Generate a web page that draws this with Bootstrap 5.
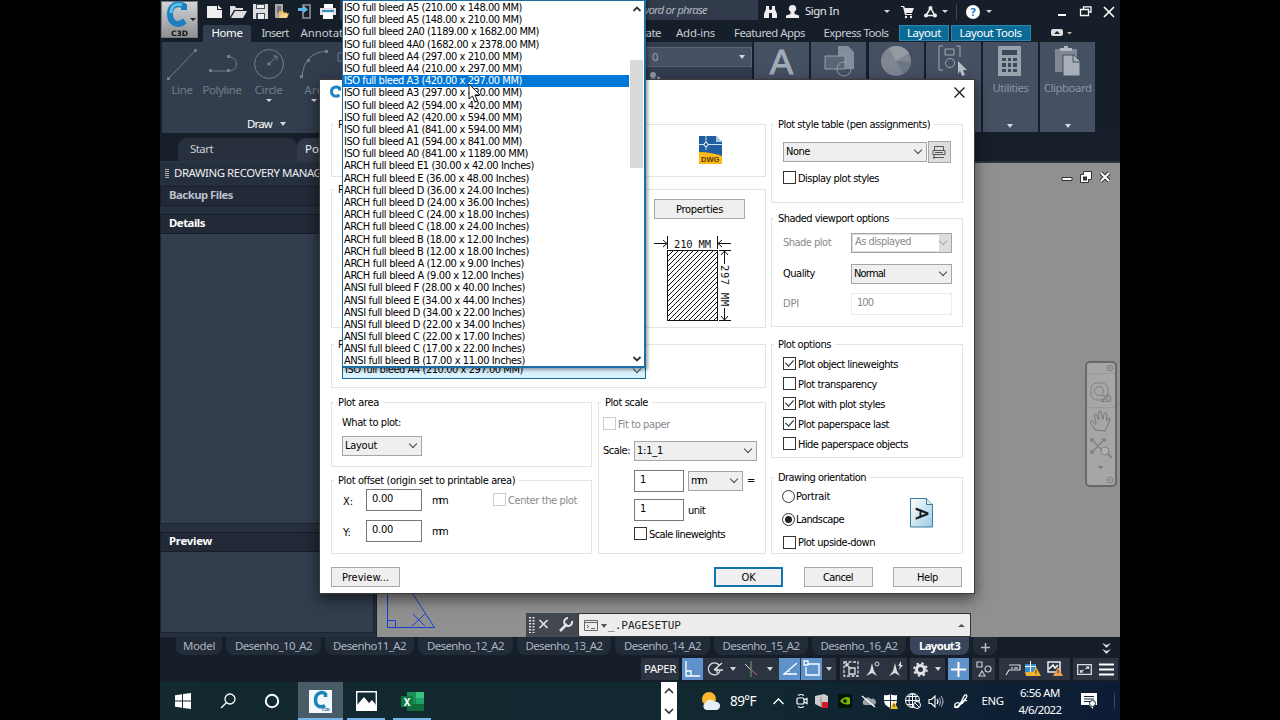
<!DOCTYPE html>
<html lang="en">
<head>
  <meta charset="UTF-8">
  <title>Page Setup</title>
  <meta name="viewport" content="width=device-width, initial-scale=1">
  <link href="https://cdn.jsdelivr.net/npm/bootstrap@5.3.2/dist/css/bootstrap.min.css" rel="stylesheet">
  <style>
    body { background: #000; width: 1280px; height: 720px; overflow: hidden; font: 11.4px/1.25 "Noto Sans", "Open Sans", sans-serif; color: #c9ced6; }
    svg { display: block; overflow: visible; }
    [data-w] { white-space: nowrap; }
    .app { width: 960px; height: 720px; background: #161e29; }
    .strip { display: grid; align-items: center; justify-items: center; white-space: nowrap; }
    .caret { width: 0; height: 0; border: 3.5px solid transparent; border-top: 4px solid #d5d8dc; border-bottom: 0; }
    .caret-sm { border-width: 3px; border-top-width: 3px; border-bottom: 0; }

    /* title bar */
    .titlebar { height: 23px; padding-left: 43px; grid-template-columns: 24px 23px 20px 23px 23px 24px 418px 24px 20px 78px 14px 26px 20px 9px 14px 20px 12px 55px 24px 23px 23px; color: #e6e9ec; }
    .searchbox { width: 100%; height: 20px; align-self: start; background: #323b4b; color: #b0b6c0; font-style: italic; padding: 3px 51px 0 0; text-align: right; }
    .sign { justify-self: start; padding-left: 3px; }
    .vline { width: 1px; height: 16px; background: #3d4653; }
    .appbtn { left: 161px; top: 1px; width: 37px; height: 37px; background: linear-gradient(#d3d4d6, #8f9093); border: 1px solid #77797d; z-index: 2; }

    /* ribbon */
    .menutabs { height: 19px; padding: 1px 0 0 43px; grid-template-columns: 48px 48px 52px 249px 66px 59px 89px 84px 52px 81px 89px; }
    .menutabs > .on { background: #323d4e; color: #fff; width: 48px; height: 17px; padding-top: 1px; text-align: center; align-self: end; border-radius: 2px 2px 0 0; }
    .ctx { background: #0b6b97; border: 1px solid #2a86b0; color: #fff; height: 16px; line-height: 14px; text-align: center; }
    .ribbon { height: 91px; padding-left: 2px; display: grid; grid-template-columns: 590px repeat(6, 55px); column-gap: 2.2px; }
    .panel-wide { background: #323d4e; color: #727d8c; }
    .tools { display: grid; grid-template-columns: 40px 40px 53px 37px; justify-items: center; padding-top: 5px; height: 75px; align-content: start; row-gap: 2px; }
    .tools svg { height: 34px; }
    .draw-t { padding-left: 85px; color: #fff; }
    .layers { width: 110px; padding-top: 5px; }
    .layerbox { height: 20px; background: #465163; border: 1px solid #596477; padding: 0 6px 0 9px; color: #99a1ad; }
    .pane { background: #455063; color: #8b94a1; padding-top: 4px; height: 90px; }
    .pane > span { margin-top: 5px; }
    .doctabs { height: 30px; padding: 5px 0 0 18px; display: flex; background: #161f2a; border-bottom: 2px solid #2b3442; }
    .doctab { width: 119px; height: 23px; background: #28303e; border-radius: 9px 9px 0 0; padding: 4px 0 0 12px; }
    .doctab + .doctab { background: #323b4b; color: #fff; padding-left: 8px; }

    /* drawing recovery palette */
    .palette { width: 217px; background: #262f3d; border-right: 1px solid #1b2330; }
    .pal-title { height: 23px; color: #eef0f2; padding: 3px 0 0 14px; position: relative; }
    .grip { width: 4px; height: 9px; background: repeating-linear-gradient(#a7adb5 0 1px, transparent 1px 2px); position: absolute; left: 5px; top: 6px; }
    .pal-head { background: #222a37; border: 1px solid #171e29; height: 20px; padding: 1px 0 0 8px; font-weight: 700; color: #fff; margin-right: 2px; }
    .pal-head.soft { color: #b9bfc8; }
    .pal-body { background: #323d4e; border: 1px solid #1b2330; border-top: 0; margin-right: 2px; }
    #thumb { height: 81px; }

    /* canvas */
    .canvas { background: #909090; position: relative; }
    .wbtns { right: 9px; top: 8px; width: 50px; }
    .tri { left: 9px; top: 425px; }
    .navbar-tool { right: 3px; top: 198px; width: 32px; height: 126px; background: #a6a6a6; border: 2px solid #686868; border-radius: 5px; }
    .cmdline { left: 149px; bottom: 0; width: 445px; height: 24px; background: #434750; z-index: 1; }
    .cmdbox { width: 393px; background: #ededed; border: 1px solid #333; border-radius: 2px; color: #222; font: 11px "DejaVu Sans Mono", monospace; padding: 1px 5px 0; }
    .modeltabs { height: 19px; padding-left: 14px; grid-template-columns: 50px 99px 93px 99px 98px 99px 98px 98px 63px 28px 94px 27px; color: #adb5c0; }
    .modeltabs > div { align-self: stretch; justify-self: stretch; text-align: center; padding-top: 2px; }
    .mtab { background: #222b38; border-radius: 0 0 8px 8px; margin: 0 2px 1px; }
    .mtab.on { background: #38455a; color: #fff; font-weight: 700; }

    /* status bar */
    .statusbar { height: 26px; padding: 2px 2px 2px 481px; display: grid; grid-template-columns: 38px 154px 67px 35px 21px 23px 71px 45px; column-gap: 3.3px; }
    .statusbar > div { background: #2c3441; height: 22px; color: #fff; }
    .g-snap { grid-template-columns: 21px 24px 12px 24px 14px 2px 21px 1px 21px 14px; }
    .g-anno { grid-template-columns: 22px 23px 22px; }
    .g-gear { grid-template-columns: 22px 13px; }
    .g-iso { grid-template-columns: 28px 13px 30px; }
    .g-end { grid-template-columns: 22px 23px; }
    .lit { background: #5f92ca !important; width: 21px; height: 22px; padding: 2px; }

    /* taskbar */
    .taskbar { height: 38px; grid-template-columns: 45px 46px 42px 5px 45px 46px 46px 1fr 16px 22px 24px 40px 30px 18px 22px 24px 22px 23px 22px 23px 28px 35px 60px 38px 12px; background: linear-gradient(90deg, #12292f, #112831 60%, #0d1c35); color: #fff; }
    .task { height: 38px; width: 45px; display: flex; align-items: center; justify-content: center; position: relative; }
    .task::after { content: ""; position: absolute; bottom: 0; height: 2px; width: 38px; background: #76b5ec; }
    .task.cur { background: #475c66; }
    .task.cur::after { width: 45px; }
    .scrollbit { background: #fff; width: 16px; height: 38px; padding: 6px 0; }
    .temp { font-size: 13.5px; }
    .clock { line-height: 17px; text-align: center; padding-bottom: 1px; }

    /* page setup dialog */
    .dlg { left: 319px; top: 79px; width: 656px; height: 515px; background: #fff; border: 1px solid #3c3c3c; box-shadow: 0 5px 14px rgba(0,0,0,.55); color: #000; font: 11px/14px "DejaVu Sans Condensed", Tahoma, sans-serif; z-index: 5; }
    .dlg-head { height: 44px; padding: 6px 9px 0 9px; }
    .dlg-x { margin-top: 1px; }
    .dlg-body { padding-left: 11px; display: grid; grid-template-columns: 435px 192px; column-gap: 5px; }
    .grp { border: 1px solid #e3e3e3; position: relative; }
    .grp-t { position: absolute; top: -8px; left: 2px; padding: 0 4px; background: #fff; line-height: 15px; }
    .h-page { height: 53px; margin-bottom: 12px; padding: 11px 0 0 367px; }
    .h-printer { height: 139px; margin-bottom: 16px; padding: 9px 0 0 322px; }
    .h-paper { height: 44px; margin-bottom: 14px; padding: 12px 0 0 10px; }
    .h-area { height: 65px; margin-bottom: 13px; padding: 9px 0 0 10px; }
    .h-offset { height: 74px; padding: 8px 0 0 11px; }
    .h-scale { height: 152px; width: 168px; padding: 11px 0 0 4px; }
    .h-style { height: 79px; margin-bottom: 15px; padding: 17px 0 0 11px; }
    .h-shade { height: 109px; margin-bottom: 17px; padding: 9px 0 0 11px; }
    .h-opts { height: 114px; margin-bottom: 19px; padding: 9px 0 0 11px; }
    .h-orient { height: 77px; padding: 7px 28px 0 11px; }
    .w-left { width: 261px; }
    .w-lab { width: 23px; padding-top: 3px; }
    .w-mm { width: 71px; padding: 1px 0 0 10px; }
    .w-sc { width: 31px; }
    .frow { display: flex; align-items: center; height: 20px; }
    .frow > [data-w] { padding-top: 1px; }
    .shade-row { height: 30.5px; }
    .shade-row > :first-child { width: 68px; }
    .orient-row { height: 23px; }
    .h-offset .frow { height: 22px; }
    .h-offset .mt-y { margin-top: 9px; }
    .h-scale .s1 { margin-top: 7px; }
    .h-scale .s2, .h-scale .s3, .h-scale .s4 { margin-left: 31px; }
    .h-scale .s2 { margin-top: 10px; }
    .h-scale .s3 { margin-top: 9px; }
    .h-scale .s4 { margin-top: 4px; }
    .h-style .st { margin-top: 6px; }

    /* controls */
    .sel { background: #efefef; border: 1px solid #a5a5a5; height: 20px; display: flex; align-items: center; justify-content: space-between; padding: 0 5px 0 2px; }
    .sel::after { content: ""; width: 6px; height: 6px; border: solid #444; border-width: 0 1.2px 1.2px 0; transform: translateY(-2px) rotate(45deg); }
    .sel.gray { background: #ddd; padding-left: 1px; }
    .sel.gray > span { background: #fff; width: 86px; height: 16px; padding-left: 2px; }
    .sel.gray::after { border-color: #aaa; }
    .inp { border: 1px solid #777; height: 22px; padding: 2px 0 0 5px; background: #fff; }
    .cb { width: 13px; height: 13px; border: 1px solid #333; margin-right: 2px; flex: none; background: #fff; position: relative; top: -.5px; }
    .cb.off { border-color: #ccc; }
    .chk::after { content: ""; position: absolute; left: 3px; top: 0; width: 5px; height: 8px; border: solid #222; border-width: 0 1.3px 1.3px 0; transform: rotate(42deg); }
    .rd { border-radius: 50%; margin-right: 1px; margin-left: -1px; padding: 2px; }
    .rd i { display: block; width: 7px; height: 7px; border-radius: 50%; background: #222; }
    .dim { color: #8a8a8a; }
    .w-50 { width: 50px !important; }
    .w-55 { width: 55px; } .w-56 { width: 56px; } .w-80 { width: 80px; } .w-101 { width: 101px; } .w-123 { width: 123px; } .w-144 { width: 144px; }
    .w-combo { width: 304px; height: 22px; background: #d9f1fd; border-color: #1a6a9c; align-items: flex-start; padding-top: 5px; }
    .w-combo::after { margin-top: 5px; }
    .wbtn { background: #efefef; border: 1px solid #a8a8a8; height: 20px; width: 69px; padding: 0; line-height: 19px; color: #000; text-align: center; }
    .wbtn.def { border: 2px solid #1373ac; line-height: 17px; }
    .wbtn.prop { width: 91px; }
    .wbtn.editor { width: 23px; height: 22px; margin-left: 1px; background: #ddd; }
    .dlg-foot { padding: 13px 12px 0 11px; }
    .foot-r { gap: 20.5px; }
    .sheet { margin-top: 13px; }

    /* opened paper size list */
    .drop { left: 342px; top: 0; width: 304px; height: 368px; background: #fff; border: 1px solid #1c6fa5; border-width: 1px 2px 2px 1px; z-index: 8; box-shadow: 2px 2px 3px rgba(0,0,0,.35); color: #000; font: 11px/12.19px "DejaVu Sans Condensed", Tahoma, sans-serif; overflow: hidden; }
    .drop-items { width: 286px; padding-top: 1px; }
    .drop-items > div { height: 12.19px; padding-left: 1px; }
    .drop-items > .hit { background: #0078d7; color: #fff; }
    .drop-scroll { width: 15px; padding: 5px 0 4px; }
    .thumb { width: 13px; height: 108px; margin-top: 48px; background: #dadada; }
    .cursor { left: 468px; top: 83px; z-index: 9; }
  </style>
</head>
<body>

  <div class="app mx-auto d-flex flex-column">

    <!-- Quick access bar -->
    <div class="strip titlebar">
      <svg width="16" height="13" fill="#eee"><path d="M0 1h10v4h5v8H0z"/><path d="M11 0l4 4h-4z"/></svg>
      <svg width="17" height="13" fill="#ddd"><path d="M0 12V1h5l1 2h7v2H4z"/><path d="M1 13l4-7h12l-4 7z"/></svg>
      <svg width="15" height="15"><path d="M0 0h15v15H0z" fill="#ddd"/><path d="M3 0h9v5H3zM3 9h9v6H3z" fill="#46505f"/><path d="M4 1h7v3H4zM5 10h6v5H5z" fill="#eee"/></svg>
      <svg width="15" height="15"><path d="M1 0h8v14H1z" fill="#aaa"/><path d="M3 2h4v7H3z" fill="#777"/><path d="M5 14V7h4l1 1.500h3V10H7z" fill="#e9b95c"/><path d="M5 14l2.500-4.500H15L13 14z" fill="#f7d48a"/></svg>
      <svg width="14" height="15"><path d="M5 1h7v13H5z" fill="none" stroke="#999" stroke-width="1.500"/><path d="M0 4h5V1l5 4.500-5 4V7H0z" fill="#5db4e8"/></svg>
      <svg width="16" height="15"><path d="M4 0h9v4H4z" fill="#fff"/><path d="M0 4h16v7H0z" fill="#ddd"/><path d="M2 6h12v2H2z" fill="#3b93cc"/><path d="M3 9h10v6H3z" fill="#fff"/></svg>
      <div class="searchbox">Type a key<span data-w="66">word or phrase</span></div>
      <svg width="13" height="12" fill="#eee"><path d="M2 0h3v3l1 1h1l1-1V0h3v3l2 5v4H8V7H5v5H0V8l2-5z"/></svg>
      <svg width="13" height="13" fill="#eee"><path d="M6.500 0a3.500 3.500 0 0 1 2 6.500V9l4.500 1.500V13H0v-2.500L4.500 9V6.500a3.500 3.500 0 0 1 2-6.500z"/></svg>
      <span class="sign"><span data-w="34">Sign In</span></span>
      <i class="caret caret-sm"></i>
      <svg width="13" height="12" fill="#eee"><path d="M0 0h3l1 2h9l-2 5H5l.5 1H11v1H4L2 1H0z"/><circle cx="5" cy="11" r="1.200"/><circle cx="10" cy="11" r="1.200"/></svg>
      <svg width="13" height="12" fill="none" stroke="#eee" stroke-width="1.500"><path d="M6.500 2L2 9.500h9z"/><g fill="#eee" stroke="none"><circle cx="6.500" cy="2" r="2"/><circle cx="2" cy="9.500" r="2"/><circle cx="11" cy="9.500" r="2"/></g></svg>
      <i class="caret caret-sm"></i>
      <i class="vline"></i>
      <svg width="14" height="14"><circle cx="7" cy="7" r="7" fill="#fff"/><text x="7" y="11" font-size="11" font-weight="700" text-anchor="middle" fill="#1a6fae">?</text></svg>
      <i class="caret caret-sm"></i>
      <span></span>
      <svg width="8" height="9"><path d="M0 8h8" stroke="#fff" stroke-width="2"/></svg>
      <svg width="12" height="11" fill="none" stroke="#fff"><path d="M3.500 3V.8h7.500V6H9M.5 3.500h8v6h-8z" stroke-width="1.300"/></svg>
      <svg width="10" height="10"><path d="M0 0l10 10M10 0L0 10" stroke="#fff" stroke-width="1.600"/></svg>
    </div>

    <!-- Ribbon tabs -->
    <div class="strip menutabs">
      <div class="on"><span data-w="31">Home</span></div>
      <span data-w="27">Insert</span>
      <span data-w="49">Annotate</span>
      <span></span>
      <span data-w="56">Collaborate</span>
      <span data-w="39">Add-ins</span>
      <span data-w="71">Featured Apps</span>
      <span data-w="65">Express Tools</span>
      <div class="ctx w-50"><span data-w="34">Layout</span></div>
      <div class="ctx w-80"><span data-w="62">Layout Tools</span></div>
      <svg width="89" height="8"><rect x="20" y="0" width="12" height="7" rx="2" fill="#ddd"/><path d="M23 5l3-3 3 3z" fill="#222"/><path d="M36 3h5l-2.500 2.500z" fill="#bbb"/></svg>
    </div>

    <!-- Ribbon -->
    <div class="ribbon">
      <div class="panel-wide d-flex justify-content-between">
        <div>
          <div class="tools">
            <svg width="32" stroke="#727d8c" fill="none"><path d="M3 31L29 4"/><path d="M1 30h3v3H1zM28 2h3v3h-3z" fill="#727d8c" stroke="none"/></svg>
            <svg width="32" stroke="#727d8c" fill="none"><path d="M4 24h19c10 0 10-14 0-14"/><path d="M3 22h3v3H3zM21 22h3v3h-3zM21 8h3v3h-3z" fill="#727d8c" stroke="none"/></svg>
            <svg width="32" stroke="#727d8c" fill="none"><circle cx="16" cy="17" r="14.500"/><path d="M16 17l8-8M20 9h4v4"/><path d="M14.500 15.500h3v3h-3z" fill="#727d8c" stroke="none"/></svg>
            <svg width="32" stroke="#727d8c" fill="none"><path d="M4 30Q6 5 30 4M40 6h8v8h-8z"/><path d="M2 28h3v3H2zM9 12h3v3H9zM27 3h3v3h-3z" fill="#727d8c" stroke="none"/></svg>
            <span data-w="21">Line</span><span data-w="39">Polyline</span><span data-w="28">Circle</span><span data-w="18">Arc</span>
            <span></span><span></span><i class="caret caret-sm"></i><i class="caret caret-sm"></i>
          </div>
          <div class="draw-t d-flex align-items-center gap-2"><span data-w="25">Draw</span><i class="caret"></i></div>
        </div>
        <div class="layers">
          <div class="layerbox d-flex justify-content-between align-items-center">0<i class="caret"></i></div>
          <svg width="60" height="14" class="mt-1" fill="#8d96a3"><circle cx="11" cy="4" r="3"/><path d="M5 11c1-5 11-5 12 0M15 5l4 2-4 2z"/></svg>
        </div>
      </div>
      <div class="pane"><svg width="55" height="28"><text x="27.500" y="28" font-family="Liberation Sans" font-size="35" text-anchor="middle" fill="#a3abb6" stroke="#a3abb6">A</text></svg></div>
      <div class="pane"><svg width="55" height="30" fill="none" stroke="#97a0ac"><path d="M27 0h10l6 6v17H27z" fill="#848d9b" stroke="none"/><path d="M14 10h20v13H14z" fill="#5c6676"/><circle cx="33" cy="23" r="7"/></svg></div>
      <div class="pane"><svg width="55" height="30"><circle cx="27" cy="15" r="15" fill="#7f8792"/><path d="M27 15L20 2a15 15 0 0 1 20 5z" fill="#959ba4"/><path d="M27 15l7 13a15 15 0 0 0 8-12z" fill="#6d7683"/></svg></div>
      <div class="pane"><svg width="55" height="30" fill="none" stroke="#a0a8b3"><path d="M17 0h-4v24h4M30 0h4v11"/><path d="M19 3h9v6h-9z"/><circle cx="24" cy="17" r="4.500"/><path d="M32 15l9 9-4 0 2 5-3 1-2-5-2 3z" fill="#bcc1c8" stroke="none"/></svg></div>
      <div class="pane d-flex flex-column align-items-center">
        <svg width="24" height="30"><path d="M0 0h23v30H0z" fill="#99a1ac"/><path d="M4 4h15v5H4zM4 12h4v3H4zm6 0h3v3h-3zm5 0h4v3h-4zM4 17h4v4H4zm6 0h3v4h-3zm5 0h4v4h-4zM4 23h4v3H4zm6 0h3v3h-3zm5 0h4v3h-4z" fill="#3d4859"/></svg>
        <span data-w="36">Utilities</span><i class="caret mt-auto mb-1"></i>
      </div>
      <div class="pane d-flex flex-column align-items-center">
        <svg width="26" height="30"><path d="M0 3h22v23H0z" fill="#7f8895"/><path d="M5 5V2h4V0h4v2h4v3z" fill="#b4bac3"/><path d="M8 9h11l6 6v15H8z" fill="#a8afb9" stroke="#455063"/><path d="M18 9v7h7" fill="none" stroke="#455063"/></svg>
        <span data-w="48">Clipboard</span><i class="caret mt-auto mb-1"></i>
      </div>
    </div>

    <!-- File tabs -->
    <div class="doctabs">
      <div class="doctab"><span data-w="23">Start</span></div>
      <div class="doctab">Portuguese</div>
    </div>

    <div class="d-flex flex-grow-1">
      <div class="palette d-flex flex-column">
        <div class="pal-title"><i class="grip"></i><span data-w="160">DRAWING RECOVERY MANAGER</span></div>
        <div class="pal-head soft"><span data-w="64">Backup Files</span></div>
        <div class="pal-head mt-2"><span data-w="36">Details</span></div>
        <div class="pal-body flex-grow-1"></div>
        <div class="pal-head mt-2"><span data-w="43">Preview</span></div>
        <div class="pal-body mb-1" id="thumb"></div>
      </div>
      <div class="canvas flex-grow-1">
        <div class="wbtns position-absolute d-flex justify-content-between align-items-center">
          <svg width="12" height="12"><path d="M1 6.500h10v3H1z" fill="#fff" stroke="#333"/></svg>
          <svg width="12" height="12"><path d="M3.500.5h8v8h-3v3h-8v-8h3z" fill="#fff" stroke="#333"/><path d="M3 5.500h4v4H3z" fill="#333"/></svg>
          <svg width="12" height="12"><path d="M2 2l8 8M10 2l-8 8" stroke="#333" stroke-width="4"/><path d="M2 2l8 8M10 2l-8 8" stroke="#fff" stroke-width="2"/></svg>
        </div>
        <svg class="tri position-absolute" width="50" height="42" fill="none" stroke="#1440d8"><path d="M1.500 0v39.500h47L23 0M1.500 32.500h8v7M27 26l12 12M26 38l13-12"/></svg>
        <div class="navbar-tool position-absolute">
          <svg width="28" height="122" fill="none" stroke="#818181"><path d="M0 10.500h28M0 44.500h28" stroke="#999"/><circle cx="23" cy="5" r="3"/><path d="M21.500 3.500l3 3m0-3l-3 3"/><rect x="4" y="20" width="17" height="17" rx="6"/><circle cx="12" cy="28" r="4.500"/><path d="M8 67c-2-5-6-7-4-9 2-1 4 4 5 3 0-4-3-9-1-10s3 6 4 6c0-4-1-9 1-9s2 6 3 8c1-4 1-7 3-6s0 6 1 8c1-3 3-4 3-2-1 4-3 8-5 12z" stroke="#777"/><path d="M4 76l14 14M18 76L4 90M4 79v-3h3M15 76h3v3M4 87v3h3" stroke-width="1.500"/><circle cx="18" cy="88" r="4" fill="#b0b0b0"/><path d="M21 91l4 4" stroke-width="2"/><circle cx="23" cy="117" r="3"/><path d="M21 117h4"/><path d="M11 103h5l-2.500 3z" fill="#777" stroke="none"/><text x="14" y="39" font-size="8" fill="#66717e" stroke="none">2D</text></svg>
        </div>
        <div class="cmdline position-absolute d-flex justify-content-between">
          <svg width="50" height="24" fill="none" stroke="#e5e5e5"><path d="M4 4v16M7.500 4v16" stroke-width="2" stroke-dasharray="1.500 1.500"/><path d="M13.500 7l8 8m0-8l-8 8" stroke-width="1.700"/><path d="M34 18l7-7" stroke-width="2.500"/><path d="M46 8a4 4 0 1 1-4-3" stroke-width="2"/></svg>
          <div class="cmdbox d-flex align-items-center">
            <svg width="24" height="12" fill="none" stroke="#666"><path d="M.5.500h13v10H.5zM.5 2.500h13M3 5l2 1.500L3 8M7 8.500h4"/><path d="M17 4h6l-3 4z" fill="#555" stroke="none"/></svg>
            <span data-w="73">_.PAGESETUP</span>
            <svg class="ms-auto" width="7" height="5"><path d="M0 4h7L3.500 1z" fill="#555"/></svg>
          </div>
        </div>
      </div>
    </div>

    <!-- Layout tabs -->
    <div class="strip modeltabs">
      <div class="mtab"><span data-w="32">Model</span></div>
      <div class="mtab"><span data-w="77">Desenho_10_A2</span></div>
      <div class="mtab"><span data-w="73">Desenho11_A2</span></div>
      <div class="mtab"><span data-w="77">Desenho_12_A2</span></div>
      <div class="mtab"><span data-w="77">Desenho_13_A2</span></div>
      <div class="mtab"><span data-w="77">Desenho_14_A2</span></div>
      <div class="mtab"><span data-w="77">Desenho_15_A2</span></div>
      <div class="mtab"><span data-w="77">Desenho_16_A2</span></div>
      <div class="mtab on"><span data-w="41">Layout3</span></div>
      <div class="mtab"><svg class="mx-auto mt-1" width="9" height="9"><path d="M4.500 0v9M0 4.500h9" stroke="#bbb" stroke-width="1.500"/></svg></div>
      <div></div>
      <div><svg class="mx-auto mt-1" width="9" height="11" fill="#ddd"><path d="M0 0l4.500 2L9 0 4.500 5zM0 6l4.500 2L9 6l-4.500 5z"/></svg></div>
    </div>

    <!-- Status bar -->
    <div class="statusbar">
      <div class="strip"><span data-w="32">PAPER</span></div>
      <div class="strip g-snap">
        <div class="lit"><svg width="17" height="18" fill="none" stroke="#fff" stroke-width="1.300"><path d="M2 1v15h14M2 11h5v5"/></svg></div>
        <svg width="16" height="16" fill="none" stroke="#ddd" stroke-width="1.300"><path d="M12 4a6 6 0 1 0 1 6M7 9l8-7M7 9h9M10 6v6"/></svg>
        <i class="caret"></i>
        <svg width="14" height="16" fill="none"><path d="M7 0v16" stroke="#5aa870"/><path d="M1 3l12 11" stroke="#c66"/><path d="M1 3l5 5" stroke="#ccc"/></svg>
        <i class="caret"></i><span></span>
        <div class="lit"><svg width="17" height="18" fill="none" stroke="#fff" stroke-width="1.300"><path d="M16 3L3 14h13" /><path d="M8 14v-3" stroke-dasharray="1 1"/></svg></div><span></span>
        <div class="lit"><svg width="17" height="18" fill="none" stroke="#fff" stroke-width="1.300"><path d="M5 4h11v11H3V7M1 1h4v4H1z"/></svg></div>
        <i class="caret"></i>
      </div>
      <div class="strip g-anno">
        <svg width="16" height="16" fill="none" stroke="#ddd" stroke-width="1.300"><path d="M1 1h14v14H1z" stroke-dasharray="3 1.500"/><path d="M6 7h6v6H6zM3 3l5 5M3 6V3h3"/></svg>
        <svg width="16" height="16" fill="#ddd"><path d="M7 2l2 8 3 5-5-3-6 3 4-5z"/><circle cx="12" cy="3" r="2" fill="none" stroke="#ddd"/></svg>
        <svg width="16" height="16" fill="#ddd"><path d="M7 2l2 8 3 5-5-3-6 3 4-5z"/><path d="M13 0l-3 5h2l-1 4 4-5h-2z"/></svg>
      </div>
      <div class="strip g-gear">
        <svg width="15" height="15" fill="none" stroke="#e3e3e3"><circle cx="7.500" cy="7.500" r="4" stroke-width="3"/><circle cx="7.500" cy="7.500" r="6.300" stroke-width="2" stroke-dasharray="2.500 2.450"/></svg>
        <i class="caret"></i>
      </div>
      <div class="lit"><svg width="17" height="18" stroke="#fff" stroke-width="2"><path d="M8.500 2v15M1 9.500h15"/></svg></div>
      <div class="strip"><svg width="16" height="16" fill="none" stroke="#ccc" stroke-width="1.200"><path d="M1 1h5v5H1zM6 10l3 5H3z"/><circle cx="12" cy="8" r="3"/></svg></div>
      <div class="strip g-iso">
        <svg width="16" height="12" fill="none" stroke="#ddd" stroke-width="1.200"><path d="M4 2h11v5H4l-3 5M7 4v2M10 4v2M12 4v2"/></svg>
        <svg width="16" height="16"><path d="M0 3h11v8H0z" fill="#3a8fcb"/><path d="M5 0h1v12H5zM0 5h11v1H0z" fill="#fff"/><path d="M0 11h8v4H1z" fill="#efb335"/><path d="M11 6l5 9H6z" fill="#f5b52e"/><path d="M10.500 9h1v3h-1zm0 3.500h1v1h-1z" fill="#333"/></svg>
        <svg width="16" height="16"><path d="M1 1h12v10H1z" fill="none" stroke="#eee" stroke-width="1.500"/><path d="M2 8l4-4 2 3 3-3" fill="none" stroke="#fff" stroke-width="1.500"/><path d="M11 6l5 9H6z" fill="#ee9a52"/><path d="M10.500 9h1v3h-1z" fill="#333"/></svg>
      </div>
      <div class="strip g-end">
        <svg width="15" height="11" fill="none" stroke="#ddd" stroke-width="1.300"><path d="M.7.700h13.600v9.600H.7zM8.500 5l3-2m-2 0h2v2M6.500 6l-3 2m2 0h-2V6"/></svg>
        <svg width="15" height="13" stroke="#fff" stroke-width="1.800"><path d="M0 1.500h15M0 6.500h15M0 11.500h15"/></svg>
      </div>
    </div>

    <!-- Windows taskbar -->
    <div class="strip taskbar">
      <svg width="16" height="16" fill="#fff"><path d="M0 2.200l7-1V7.500H0zM8 1l8-1v7.500H8zM0 8.500h7v6.300l-7-1zM8 8.500h8V16l-8-1.100z"/></svg>
      <svg width="16" height="16" fill="none" stroke="#fff" stroke-width="1.300"><circle cx="10" cy="6" r="5"/><path d="M6.300 9.700L1 15"/></svg>
      <svg width="16" height="16"><circle cx="8" cy="8" r="6.200" fill="none" stroke="#fff" stroke-width="2"/></svg>
      <span></span>
      <div class="task cur"><svg width="23" height="23"><path d="M0 0h23v23H0z" fill="#f2f8fb"/><path d="M16.500 7V4C13 1 6.500 3 6.500 10c0 7 6 8 9.500 5.500" fill="none" stroke="#1c83b5" stroke-width="3.500"/><text x="13" y="21" font-size="4" font-weight="700" fill="#1c5f93">C3D</text></svg></div>
      <div class="task"><svg width="21" height="20"><path d="M.7.700h19.600v18.600H.7z" fill="none" stroke="#fff" stroke-width="1.400"/><path d="M1 19v-5l7-8 5 6 3-3 4 5v5z" fill="#fff"/></svg></div>
      <div class="task"><svg width="23" height="19"><path d="M6 0h8.500v19H6z" fill="#1c9155"/><path d="M14.500 0H23v6h-8.500z" fill="#34c481"/><path d="M14.500 6H23v6h-8.500z" fill="#21a366"/><path d="M6 12h17v7H6z" fill="#146c3c"/><path d="M0 4h12v11H0z" fill="#0f7a40"/><text x="6" y="13.500" font-size="10" font-weight="700" text-anchor="middle" fill="#fff">X</text></svg></div>
      <span></span>
      <div class="scrollbit d-flex flex-column justify-content-between align-items-center"><svg width="8" height="5"><path d="M0 5l4-4 4 4" fill="none" stroke="#333" stroke-width="1.600"/></svg><svg width="8" height="5"><path d="M0 0l4 4 4-4" fill="none" stroke="#333" stroke-width="1.600"/></svg></div>
      <span></span>
      <svg width="20" height="18"><circle cx="8" cy="7" r="7" fill="#fbb62c"/><path d="M5 18a4 4 0 0 1-1-7 6 6 0 0 1 10-1 4 4 0 0 1 2 8z" fill="#e6eef6"/></svg>
      <span data-w="26" class="temp">89°F</span>
      <svg width="11" height="7"><path d="M.5 6l5-5 5 5" fill="none" stroke="#fff" stroke-width="1.300"/></svg>
      <svg width="12" height="14" fill="none" stroke="#fff" stroke-width="1.200"><rect x="1" y="4" width="7" height="6" rx="1"/><path d="M8 6l3-1.500v5L8 8M2 1.500q3-2 6 0M2 12.500q3 2 6 0"/></svg>
      <svg width="14" height="15"><path d="M0 2l9-2 4 2v9l-7 2-6-3z" fill="#ccc"/><path d="M6 3v9" stroke="#888"/><path d="M7 8h6v6H7z" fill="#d71920"/></svg>
      <svg width="14" height="14"><path d="M0 0h14v14H0z" fill="#05130a"/><path d="M2 7q5-6 10-3v6q-6 2-10-3z" fill="#76b900"/><circle cx="7" cy="7" r="1.800" fill="#05130a"/></svg>
      <svg width="15" height="13"><path d="M3 10a3 3 0 0 1 0-5 4 4 0 0 1 7-1 3 3 0 0 1 3 6z" fill="#98a0a8"/><path d="M1 1l13 11" stroke="#fff" stroke-width="1.300"/></svg>
      <svg width="14" height="15"><path d="M0 1q4 1 6.500-1Q9 2 13 1v5c0 5-4 7-6.500 8C4 13 0 11 0 6z" fill="#fff"/><path d="M6 0h1v14H6zM0 6h13v1H0z" fill="#1b2b45"/><path d="M10 7l4 8H6z" fill="#f7bd26"/><path d="M9.500 10h1v3h-1z" fill="#333"/></svg>
      <svg width="16" height="16" fill="none" stroke="#fff"><circle cx="7.500" cy="7.500" r="7"/><path d="M.5 7.500h14M7.500.500v14M2 3.500h11M2 11.500h8"/><ellipse cx="7.500" cy="7.500" rx="3.500" ry="7"/><circle cx="12" cy="12" r="3.500" fill="#10243a"/><path d="M10 10l4 4"/></svg>
      <svg width="16" height="13" fill="none" stroke="#fff" stroke-width="1.100"><path d="M1 4.500h2.500L7 1v11L3.500 8.500H1zM9 4q2 2.500 0 5"/><path d="M11 2.500q3 4 0 8M13 1q4 5.500 0 11" stroke="#9aa5b4"/></svg>
      <svg width="16" height="15" fill="none" stroke="#fff" stroke-width="1.300"><path d="M1 13c6 2 6-3 5-4S1 9 2 12s6-2 9-10c2-3 4 0 2 2L7 11M9 10q3-5 5-3"/></svg>
      <span data-w="22">ENG</span>
      <div class="clock"><span data-w="40">6:56 AM</span><br><span data-w="43">4/6/2022</span></div>
      <svg width="16" height="16"><path d="M0 0h16v12h-4v4l-4-4H0z" fill="#fff"/><path d="M3 3.500h10M3 6h10M3 8.500h6" stroke="#16263e"/><circle cx="11.500" cy="10.500" r="3" fill="#fff" stroke="#16263e"/></svg>
      <i class="vline"></i>
    </div>
  </div>

  <div class="appbtn position-absolute">
    <svg width="35" height="36"><path d="M22 8V4C16 0 8 3 8 12s7 13 15 7" fill="none" stroke="#1c7fc0" stroke-width="6"/><path d="M20 3c-6-2-11 1-11 8" fill="none" stroke="#62bfe8" stroke-width="3"/><text x="9" y="34" font-size="7.500" font-weight="700" fill="#111" font-family="DejaVu Sans">C3D</text><path d="M28 16h6l-3 3z" fill="#222"/></svg>
  </div>

  <!-- Page Setup dialog -->
  <div class="dlg position-absolute">
    <div class="dlg-head d-flex justify-content-between align-items-start">
      <svg width="12" height="12"><path d="M10.500 4.500V2C7 0 2.500 1 2.500 5.500S7 11.500 10.500 9" fill="none" stroke="#1c83c5" stroke-width="3"/></svg>
      <svg class="dlg-x" width="11" height="11"><path d="M.5.500l10 10M10.500.500l-10 10" stroke="#111" stroke-width="1.200"/></svg>
    </div>

    <div class="dlg-body">
      <div>
        <div class="grp h-page"><span class="grp-t">Page setup</span>
          <svg width="24" height="29"><path d="M0 0h17l6 6v22H0z" fill="#1f5f9f"/><path d="M17 0l6 6h-6z" fill="#a9c7e0"/><path d="M0 16q12 0 23 4v8H0z" fill="#fcb813"/><path d="M0 8.500h23M7 0v14" stroke="#cfe0ee"/><rect x="5" y="6.500" width="4" height="4" rx="2" fill="#1f5f9f" stroke="#fff"/><text x="2" y="26" font-family="Liberation Sans" font-size="7.500" font-weight="700" fill="#5a3a10">DWG</text></svg>
        </div>
        <div class="grp h-printer"><span class="grp-t">Printer/plotter</span>
          <div class="wbtn prop"><span data-w="47">Properties</span></div>
          <svg class="mt-3" width="82" height="88" fill="none" stroke="#111">
            <defs><pattern id="hatch" width="5" height="5" patternUnits="userSpaceOnUse"><path d="M-1 1l2-2M0 5l5-5M4 6l2-2" stroke="#111"/></pattern></defs>
            <rect x="13.500" y="15.500" width="50" height="70" fill="url(#hatch)"/>
            <path d="M13.500 1v13M63.500 1v13M0 8.500h13M9 5l4 3.500L9 12M77 8.500H64M68 5l-4 3.500 4 3.500M65 15.500h12M65 85.500h12M70.500 16v13M67 20l3.500-4 3.500 4M70.500 73v12M67 81l3.500 4 3.500-4"/>
            <g fill="#111" stroke="none" font-family="DejaVu Sans Mono" font-size="10.500"><text x="20" y="12.500" textLength="37">210 MM</text><text transform="translate(67 30) rotate(90)" textLength="41">297 MM</text></g>
          </svg>
        </div>
        <div class="grp h-paper"><span class="grp-t">Paper size</span>
          <div class="sel w-combo"><span data-w="178">ISO full bleed A4 (210.00 x 297.00 MM)</span></div>
        </div>
        <div class="d-flex justify-content-between">
          <div class="w-left">
            <div class="grp h-area"><span class="grp-t"><span data-w="41">Plot area</span></span>
              <div class="frow"><span data-w="59">What to plot:</span></div>
              <div class="sel w-80 mt-1"><span data-w="32">Layout</span></div>
            </div>
            <div class="grp h-offset"><span class="grp-t"><span data-w="177">Plot offset (origin set to printable area)</span></span>
              <div class="frow"><span class="w-lab">X:</span><div class="inp w-56"><span data-w="21">0.00</span></div><span class="w-mm"><span data-w="14">mm</span></span><i class="cb off"></i><span class="dim" data-w="69">Center the plot</span></div>
              <div class="frow mt-y"><span class="w-lab">Y:</span><div class="inp w-56"><span data-w="21">0.00</span></div><span class="w-mm"><span data-w="14">mm</span></span></div>
            </div>
          </div>
          <div class="grp h-scale"><span class="grp-t"><span data-w="43">Plot scale</span></span>
            <div class="frow"><i class="cb off"></i><span class="dim" data-w="52">Fit to paper</span></div>
            <div class="frow s1"><span class="w-sc"><span data-w="27">Scale:</span></span><div class="sel w-123"><span data-w="26">1:1_1</span></div></div>
            <div class="frow s2"><div class="inp w-50">1</div><div class="sel w-55 ms-1"><span data-w="14">mm</span></div><span class="ms-1">=</span></div>
            <div class="frow s3"><div class="inp w-50">1</div><span class="ms-1" data-w="17">unit</span></div>
            <div class="frow s4"><i class="cb"></i><span data-w="76">Scale lineweights</span></div>
          </div>
        </div>
      </div>

      <div>
        <div class="grp h-style"><span class="grp-t"><span data-w="152">Plot style table (pen assignments)</span></span>
          <div class="frow"><div class="sel w-144"><span data-w="24">None</span></div>
            <div class="wbtn editor"><svg width="20" height="20" fill="none" stroke="#555"><path d="M5.500 4.500h9v4h-9zM4 8.500h12v4H4zM6 10.500h8M4 15.500h11M5 13v4"/></svg></div></div>
          <div class="frow st"><i class="cb"></i><span data-w="81">Display plot styles</span></div>
        </div>
        <div class="grp h-shade"><span class="grp-t"><span data-w="111">Shaded viewport options</span></span>
          <div class="frow shade-row dim"><span><span data-w="48">Shade plot</span></span><div class="sel gray w-101"><span data-w="56">As displayed</span></div></div>
          <div class="frow shade-row"><span><span data-w="32">Quality</span></span><div class="sel w-101"><span data-w="31">Normal</span></div></div>
          <div class="frow shade-row dim"><span><span data-w="16">DPI</span></span><div class="inp w-101 border-light-subtle"><span data-w="16">100</span></div></div>
        </div>
        <div class="grp h-opts"><span class="grp-t"><span data-w="53">Plot options</span></span>
          <div class="frow"><i class="cb chk"></i><span data-w="100">Plot object lineweights</span></div>
          <div class="frow"><i class="cb"></i><span data-w="79">Plot transparency</span></div>
          <div class="frow"><i class="cb chk"></i><span data-w="87">Plot with plot styles</span></div>
          <div class="frow"><i class="cb chk"></i><span data-w="91">Plot paperspace last</span></div>
          <div class="frow"><i class="cb"></i><span data-w="110">Hide paperspace objects</span></div>
        </div>
        <div class="grp h-orient d-flex justify-content-between"><span class="grp-t"><span data-w="88">Drawing orientation</span></span>
          <div>
            <div class="frow orient-row"><i class="cb rd"></i><span data-w="34">Portrait</span></div>
            <div class="frow orient-row"><i class="cb rd"><i></i></i><span data-w="48">Landscape</span></div>
            <div class="frow orient-row"><i class="cb"></i><span data-w="77">Plot upside-down</span></div>
          </div>
          <svg class="sheet" width="24" height="30"><defs><linearGradient id="sh" x1="0" y1="0" x2="1" y2="1"><stop offset="0" stop-color="#fff"/><stop offset="1" stop-color="#9ccbe0"/></linearGradient></defs><path d="M.5.500h16l6 6v22.500H.5z" fill="url(#sh)" stroke="#3a7fa0"/><path d="M16.500.500v6h6" fill="#d8edf5" stroke="#3a7fa0"/><text transform="translate(5.500 10) rotate(90)" font-family="Liberation Sans" font-size="17" fill="#111" stroke="#111" stroke-width=".6">A</text></svg>
        </div>
      </div>
    </div>

    <div class="dlg-foot d-flex justify-content-between">
      <div class="wbtn"><span data-w="47">Preview...</span></div>
      <div class="d-flex foot-r">
        <div class="wbtn def"><span data-w="14">OK</span></div>
        <div class="wbtn"><span data-w="30">Cancel</span></div>
        <div class="wbtn"><span data-w="21">Help</span></div>
      </div>
    </div>
  </div>

  <!-- Opened paper size list -->
  <div class="drop position-absolute d-flex">
    <div class="drop-items" id="papers"></div>
    <div class="drop-scroll d-flex flex-column align-items-center">
      <svg width="8" height="6"><path d="M.5 5L4 1.500 7.500 5" fill="none" stroke="#333" stroke-width="1.800"/></svg>
      <div class="thumb"></div>
      <svg class="mt-auto" width="8" height="6"><path d="M.5 1L4 4.500 7.500 1" fill="none" stroke="#333" stroke-width="1.800"/></svg>
    </div>
  </div>
  <svg class="cursor position-absolute" width="13" height="20"><path d="M1 1v15l3.500-3 2.500 6 2.500-1-2.500-6h5z" fill="#fff" stroke="#111"/></svg>

  <script src="https://cdn.jsdelivr.net/npm/bootstrap@5.3.2/dist/js/bootstrap.bundle.min.js"></script>
  <script>
    // [standard, size, dimensions, text width]
    const papers = [
      ["ISO", "A5", "210.00 x 148.00 MM", 178], ["ISO", "A5", "148.00 x 210.00 MM", 178],
      ["ISO", "2A0", "1189.00 x 1682.00 MM", 195], ["ISO", "4A0", "1682.00 x 2378.00 MM", 195],
      ["ISO", "A4", "297.00 x 210.00 MM", 178], ["ISO", "A4", "210.00 x 297.00 MM", 178],
      ["ISO", "A3", "420.00 x 297.00 MM", 178], ["ISO", "A3", "297.00 x 420.00 MM", 178],
      ["ISO", "A2", "594.00 x 420.00 MM", 178], ["ISO", "A2", "420.00 x 594.00 MM", 178],
      ["ISO", "A1", "841.00 x 594.00 MM", 178], ["ISO", "A1", "594.00 x 841.00 MM", 178],
      ["ISO", "A0", "841.00 x 1189.00 MM", 184],
      ["ARCH", "E1", "30.00 x 42.00 Inches", 190], ["ARCH", "E", "36.00 x 48.00 Inches", 185],
      ["ARCH", "D", "36.00 x 24.00 Inches", 185], ["ARCH", "D", "24.00 x 36.00 Inches", 185],
      ["ARCH", "C", "24.00 x 18.00 Inches", 185], ["ARCH", "C", "18.00 x 24.00 Inches", 185],
      ["ARCH", "B", "18.00 x 12.00 Inches", 185], ["ARCH", "B", "12.00 x 18.00 Inches", 185],
      ["ARCH", "A", "12.00 x 9.00 Inches", 180], ["ARCH", "A", "9.00 x 12.00 Inches", 180],
      ["ANSI", "F", "28.00 x 40.00 Inches", 181], ["ANSI", "E", "34.00 x 44.00 Inches", 181],
      ["ANSI", "D", "34.00 x 22.00 Inches", 181], ["ANSI", "D", "22.00 x 34.00 Inches", 181],
      ["ANSI", "C", "22.00 x 17.00 Inches", 181], ["ANSI", "C", "17.00 x 22.00 Inches", 181],
      ["ANSI", "B", "17.00 x 11.00 Inches", 181]
    ];
    document.getElementById("papers").innerHTML = papers.map((p, i) =>
      `<div class="${i === 6 ? "hit" : ""}"><span data-w="${p[3]}">${p[0]} full bleed ${p[1]} (${p[2]})</span></div>`).join("");

    // spread or tighten each label to its own width
    document.querySelectorAll("[data-w]").forEach(el => {
      const r = document.createRange();
      r.selectNodeContents(el);
      const cur = r.getBoundingClientRect().width;
      el.style.letterSpacing = (el.dataset.w - cur) / el.textContent.length + "px";
    });
  </script>
</body>
</html>
